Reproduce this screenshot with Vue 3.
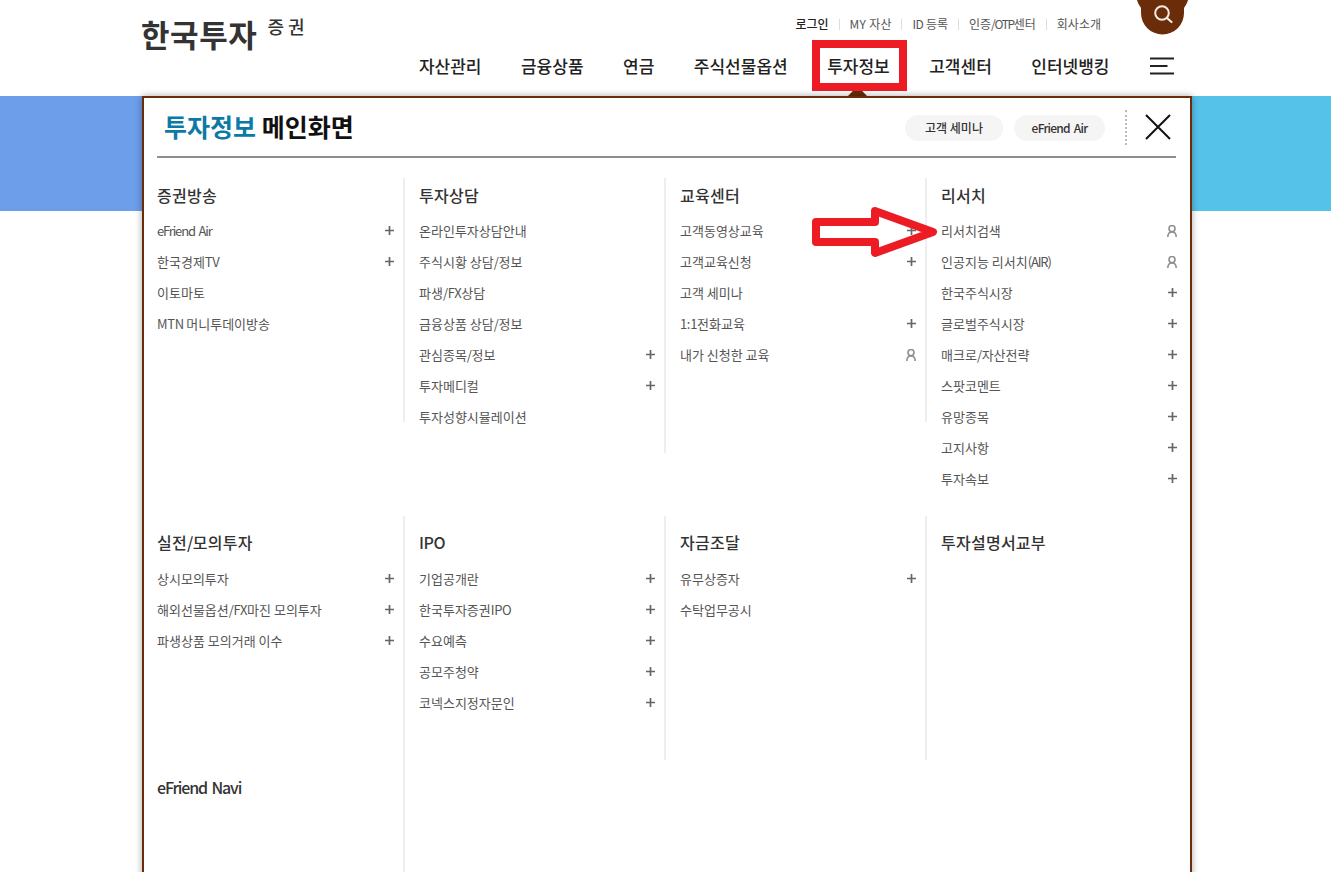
<script setup>
const utils = ['로그인', 'MY 자산', 'ID 등록', '인증/OTP센터', '회사소개']
const nav = ['자산관리', '금융상품', '연금', '주식선물옵션', '투자정보', '고객센터', '인터넷뱅킹']

const p = (t) => ({ t, i: 'plus' })
const u = (t) => ({ t, i: 'user' })
const n = (t) => ({ t })

const rows = [
  {
    key: 'first',
    groups: [
      { title: '증권방송', items: [p('eFriend Air'), p('한국경제TV'), n('이토마토'), n('MTN 머니투데이방송')] },
      { title: '투자상담', items: [n('온라인투자상담안내'), n('주식시황 상담/정보'), n('파생/FX상담'), n('금융상품 상담/정보'), p('관심종목/정보'), p('투자메디컬'), n('투자성향시뮬레이션')] },
      { title: '교육센터', tall: true, items: [p('고객동영상교육'), p('고객교육신청'), n('고객 세미나'), p('1:1전화교육'), u('내가 신청한 교육')] },
      { title: '리서치', items: [u('리서치검색'), u('인공지능 리서치(AIR)'), p('한국주식시장'), p('글로벌주식시장'), p('매크로/자산전략'), p('스팟코멘트'), p('유망종목'), p('고지사항'), p('투자속보')] }
    ]
  },
  {
    key: 'second',
    groups: [
      { title: '실전/모의투자', items: [p('상시모의투자'), p('해외선물옵션/FX마진 모의투자'), p('파생상품 모의거래 이수')] },
      { title: 'IPO', items: [p('기업공개란'), p('한국투자증권IPO'), p('수요예측'), p('공모주청약'), p('코넥스지정자문인')] },
      { title: '자금조달', items: [p('유무상증자'), n('수탁업무공시')] },
      { title: '투자설명서교부', items: [] }
    ]
  },
  {
    key: 'third',
    groups: [
      { title: 'eFriend Navi', items: [] },
      { title: '', items: [] }
    ]
  }
]

const parts = (text) =>
  text
    .split(/([A-Za-z0-9/():][A-Za-z0-9/(): ]*)/)
    .filter(Boolean)
    .map((s) => ({ s, lat: /^[A-Za-z0-9/():]/.test(s), tight: /[a-z()]/.test(s) }))
</script>

<template>
  <div class="page">
    <header class="header">
      <div class="logo">
        <span class="logo-main">한국투자</span>
        <span class="logo-sub">증권</span>
      </div>
      <div class="header-right">
        <ul class="utils">
          <li v-for="(x, i) in utils" :key="x" :class="{ strong: i === 0 }">
            <span v-for="(r, j) in parts(x)" :key="j" :class="{ lat: r.lat }">{{ r.s }}</span>
          </li>
        </ul>
        <nav class="nav">
          <a v-for="x in nav" :key="x">{{ x }}</a>
          <svg class="burger" width="24" height="18" viewBox="0 0 24 18">
            <path d="M0 1.5H24M0 9H17.5M0 16.5H24" stroke="#222" stroke-width="2" fill="none" />
          </svg>
        </nav>
      </div>
    </header>

    <div class="hero">
      <div class="hero-left"></div>
      <div class="hero-right"></div>
    </div>

    <svg class="bear" width="51" height="36" viewBox="0 0 51 36">
      <path d="M0 0C1 4 3 6 4 8V13A21.5 21.5 0 0 0 47 13V8C48 6 50 4 51 0Z" fill="#6b2c09" />
      <circle cx="25" cy="13" r="6.8" fill="none" stroke="#f4ece6" stroke-width="2" />
      <path d="M30 18L34.5 22" stroke="#f4ece6" stroke-width="2.2" stroke-linecap="round" />
    </svg>

    <div class="pointer"></div>

    <section class="panel">
      <div class="panel-head">
        <h2 class="panel-title"><em>투자정보</em> 메인화면</h2>
        <div class="panel-actions">
          <a class="pill pill-a">고객 세미나</a>
          <a class="pill pill-b"><span class="tight">eFriend Air</span></a>
          <span class="dots"></span>
          <svg class="close" width="26" height="26" viewBox="0 0 26 26">
            <path d="M1 1L25 25M25 1L1 25" stroke="#111" stroke-width="2" fill="none" />
          </svg>
        </div>
      </div>

      <div v-for="row in rows" :key="row.key" class="row" :class="row.key">
        <div v-for="(g, gi) in row.groups" :key="gi" class="col" :class="{ tall: g.tall }">
          <h3 v-if="g.title" class="col-title">
            <span v-for="(r, j) in parts(g.title)" :key="j" :class="{ lat: r.lat, tight: r.tight }">{{ r.s }}</span>
          </h3>
          <ul v-if="g.items.length" class="items">
            <li v-for="it in g.items" :key="it.t" class="item">
              <span class="label">
                <span v-for="(r, j) in parts(it.t)" :key="j" :class="{ lat: r.lat, tight: r.tight }">{{ r.s }}</span>
              </span>
              <svg v-if="it.i === 'plus'" class="ico" width="9" height="9" viewBox="0 0 9 9">
                <path d="M4.5 0V9M0 4.5H9" stroke="#666" stroke-width="1.7" fill="none" />
              </svg>
              <svg v-else-if="it.i === 'user'" class="ico" width="10" height="12" viewBox="0 0 10 12">
                <ellipse cx="5" cy="3.6" rx="3" ry="3.1" fill="none" stroke="#8f8f8f" stroke-width="1.6" />
                <path d="M.8 12C.8 8.8 2.6 7 5 7S9.2 8.8 9.2 12" fill="none" stroke="#8f8f8f" stroke-width="1.6" />
              </svg>
            </li>
          </ul>
        </div>
      </div>
    </section>

    <!-- Annotations laid over the screenshot -->
    <div class="mark-box"></div>
    <svg class="mark-arrow" width="132" height="58" viewBox="0 0 132 58">
      <path d="M4 15H63V4L121 25L63 46V35H4Z" fill="none" stroke="#ed1c24" stroke-width="8" stroke-linejoin="round" />
    </svg>
  </div>
</template>

<style scoped>
.page {
  position: relative;
  width: 1331px;
  height: 872px;
  overflow: hidden;
  background: #fff;
  font-family: "Noto Sans CJK KR", "Noto Sans", sans-serif;
  color: #333;
}
ul {
  list-style: none;
  margin: 0;
  padding: 0;
}
h2, h3 {
  margin: 0;
}
.lat {
  letter-spacing: -0.35px;
}
.tight {
  letter-spacing: -1.15px;
  word-spacing: 2px;
}

/* header */
.header {
  display: flex;
  justify-content: space-between;
  height: 96px;
  padding: 0 157px 0 141px;
}
.logo {
  display: flex;
  align-items: flex-start;
  padding-top: 12px;
  color: #333;
}
.logo-main {
  font-size: 31px;
  line-height: 44px;
  font-weight: 700;
  letter-spacing: .6px;
}
.logo-sub {
  font-size: 18px;
  line-height: 28px;
  margin-left: 10px;
  letter-spacing: 4px;
  font-weight: 500;
}
.header-right {
  display: flex;
  flex-direction: column;
  align-items: flex-end;
  padding-top: 16px;
}
.utils {
  display: flex;
  gap: 21px;
  padding-right: 73px;
  font-size: 12px;
  line-height: 16px;
  color: #555;
}
.utils li {
  position: relative;
}
.utils li:nth-child(2) .lat {
  letter-spacing: .35px;
}
.utils li:nth-child(4) .lat {
  letter-spacing: -1.35px;
}
.utils li + li::before {
  content: "";
  position: absolute;
  left: -11px;
  top: 3px;
  width: 1px;
  height: 11px;
  background: #ddd;
}
.utils .strong {
  color: #222;
  font-weight: 500;
}
.nav {
  display: flex;
  align-items: center;
  gap: 39.5px;
  margin-top: 22px;
  font-size: 17px;
  line-height: 24px;
  font-weight: 500;
  color: #222;
}
.burger {
  margin-left: 1px;
}

/* hero */
.hero {
  display: flex;
  height: 115px;
}
.hero-left {
  flex: 1;
  background: #6d9eea;
}
.hero-right {
  flex: 1;
  background: #55c2ea;
}
.bear {
  position: absolute;
  left: 1137px;
  top: 0;
}
.pointer {
  position: absolute;
  left: 848px;
  top: 90px;
  width: 19px;
  height: 6px;
  background: #6b2c09;
  clip-path: polygon(0 100%, 30% 0, 70% 0, 100% 100%);
}

/* panel */
.panel {
  position: absolute;
  left: 142px;
  top: 96px;
  box-sizing: border-box;
  width: 1050px;
  height: 800px;
  background: #fff;
  border: 2px solid #6b2c09;
  box-shadow: 0 0 7px rgba(0, 0, 0, .35);
}
.panel-head {
  display: flex;
  align-items: center;
  justify-content: space-between;
  height: 58px;
  margin: 0 14px 0 13px;
  padding: 0 5px 0 7px;
  border-bottom: 2px solid #8f8f8f;
}
.panel-title {
  margin-top: -2px;
  font-size: 25px;
  line-height: 36px;
  font-weight: 700;
  color: #111;
}
.panel-title em {
  font-style: normal;
  color: #0b7aa6;
}
.panel-actions {
  display: flex;
  align-items: center;
}
.pill {
  display: block;
  box-sizing: border-box;
  height: 26px;
  margin-top: 2px;
  border-radius: 13px;
  background: #f5f5f5;
  font-size: 12px;
  line-height: 26px;
  font-weight: 500;
  text-align: center;
  color: #333;
}
.pill-a {
  width: 98px;
}
.pill-b {
  width: 91px;
  margin-left: 11px;
}
.pill .tight {
  letter-spacing: -0.75px;
}
.dots {
  width: 0;
  height: 35px;
  margin: 0 18px 0 20px;
  border-left: 2px dotted #bbb;
}
.close {
  display: block;
}

/* menu grid */
.row {
  display: grid;
  grid-template-columns: 259px 261px 261px 265px;
  align-items: start;
  align-content: start;
}
.first {
  margin-top: 20px;
  height: 338px;
}
.col {
  box-sizing: border-box;
  height: 244px;
  padding-left: 14px;
  padding-right: 9px;
  border-left: 2px solid #eee;
}
.col:first-child {
  padding-left: 13px;
  border-left: 0;
}
.col:nth-child(4) {
  padding-right: 13px;
}
.tall {
  height: 275px;
}
.first .col {
  padding-top: 5px;
}
.second .col {
  padding-top: 14px;
}
.third .col {
  height: 112px;
  padding-top: 15px;
}
.col-title {
  font-size: 16px;
  line-height: 24px;
  font-weight: 500;
  letter-spacing: .25px;
  color: #333;
}
.items {
  margin-top: 8px;
}
.second .items {
  margin-top: 9px;
}
.item {
  display: flex;
  align-items: center;
  justify-content: space-between;
  height: 31px;
  font-size: 13px;
  color: #555;
  white-space: nowrap;
}
.ico {
  display: block;
  flex: none;
}

/* red annotations */
.mark-box {
  position: absolute;
  left: 812px;
  top: 40px;
  box-sizing: border-box;
  width: 95px;
  height: 51px;
  border: 8px solid #ed1c24;
}
.mark-arrow {
  position: absolute;
  left: 812px;
  top: 207px;
}
</style>

<style>
html, body {
  margin: 0;
  overflow: hidden;
  background: #fff;
}
</style>
